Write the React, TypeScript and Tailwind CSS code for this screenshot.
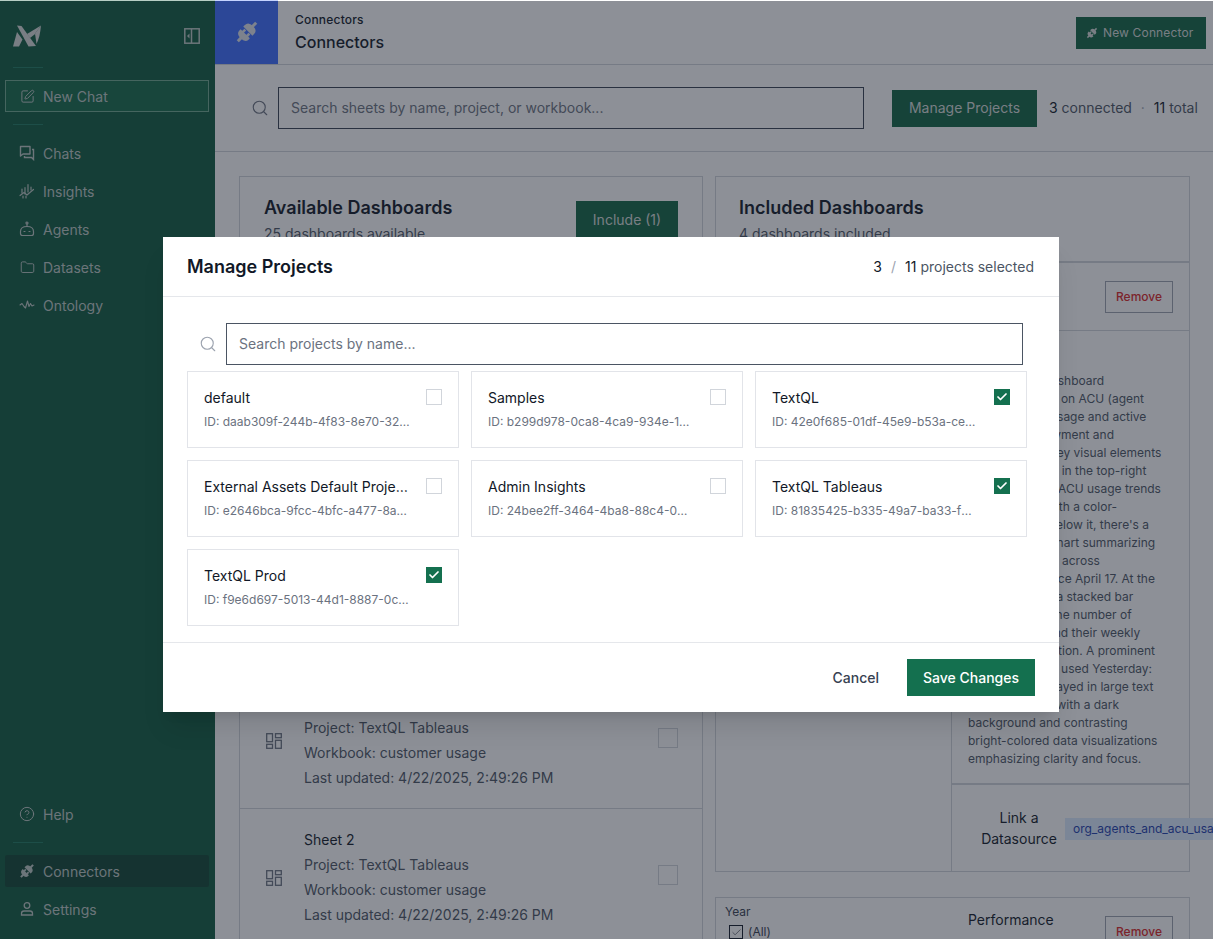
import { Check, CircleHelp, Folder, Search, SquarePen } from 'lucide-react';

const font = 'font-["Inter","Noto_Sans",sans-serif]';

function Logo() {
  return (
    <svg width="28" height="22" viewBox="0 0 28 22" fill="currentColor">
      <path d="M4 0.5 L8.5 1 L23 21 L15.5 21.5 Z" />
      <path d="M0 21.5 L4 7 L9.5 14.5 L6 21.5 Z" />
      <path d="M28 0.5 L14 9 L17 13 L21.5 9.5 Z" />
      <path d="M28 0.5 L22 8.5 L23.5 19 Q27 12 28 0.5 Z" />
    </svg>
  );
}

function PlugIcon({ size = 18 }: { size?: number }) {
  return (
    <svg width={size} height={size} viewBox="0 0 24 24" fill="currentColor">
      <g transform="rotate(45 12 12)">
        <rect x="10.5" y="-1" width="3" height="6" />
        <path d="M5.5 10.8 H18.5 V8.5 Q18.5 3.5 12 3.5 Q5.5 3.5 5.5 8.5 Z" />
        <rect x="7.8" y="11.5" width="2.6" height="4" />
        <rect x="13.6" y="11.5" width="2.6" height="4" />
        <path d="M5.5 14.5 H18.5 V16 Q18.5 21 12 21 Q5.5 21 5.5 16 Z" />
        <rect x="10.5" y="20" width="3" height="5" />
      </g>
    </svg>
  );
}

function ChatsIcon() {
  return (
    <svg width="16" height="16" viewBox="0 0 16 16" fill="none" stroke="currentColor" strokeWidth="1.4">
      <path d="M1.5 1.5 H11 V9 H4 L1.5 11 Z" strokeLinejoin="round" />
      <path d="M13 4.5 H14.5 V14.5 L12.5 12.5 H5.5 V11" />
    </svg>
  );
}

function InsightsIcon() {
  return (
    <svg width="16" height="16" viewBox="0 0 16 16" fill="none" stroke="currentColor" strokeWidth="1.2" strokeLinecap="round">
      <path d="M3 6 V10 M6 4.5 V11 M9 1.5 V9" />
      <path d="M1 12.5 L5 9.5 L8 12 L14.5 6.5" />
      <path d="M12 4 V7 M4 13 V15 M7 13 V15" />
    </svg>
  );
}

function AgentIcon() {
  return (
    <svg width="16" height="16" viewBox="0 0 16 16" fill="none" stroke="currentColor" strokeWidth="1.2" strokeLinecap="round">
      <circle cx="8" cy="2" r="1" />
      <path d="M8 3 V5.5" />
      <path d="M1.5 12.5 V10.5 Q1.5 5.5 8 5.5 Q14.5 5.5 14.5 10.5 V12.5 Q14.5 14.5 12.5 14.5 H3.5 Q1.5 14.5 1.5 12.5 Z" />
      <path d="M5 10.5 H6 M10 10.5 H11" />
    </svg>
  );
}

function OntologyIcon() {
  return (
    <svg width="16" height="16" viewBox="0 0 16 16" fill="none" stroke="currentColor" strokeWidth="1.1" strokeLinecap="round" strokeLinejoin="round">
      <path d="M1 8 L3 6.5 L5 9.5 L6.5 11 L8.5 4 L10 9.5 L11.5 6.5 L13 9 L15 8" />
    </svg>
  );
}

function UserIcon() {
  return (
    <svg width="16" height="16" viewBox="0 0 16 16" fill="none" stroke="currentColor" strokeWidth="1.3">
      <circle cx="8" cy="4.5" r="2.8" />
      <path d="M2.5 14 V12.5 Q2.5 10 5 10 H11 Q13.5 10 13.5 12.5 V14 Z" />
    </svg>
  );
}

function PanelIcon() {
  return (
    <svg width="16" height="16" viewBox="0 0 16 16" fill="none" stroke="currentColor" strokeWidth="1.5">
      <rect x="0.8" y="0.8" width="14.4" height="14.4" />
      <path d="M7.5 1 V15" />
      <path d="M5.5 5.5 L3 8 L5.5 10.5 Z" fill="currentColor" stroke="none" />
    </svg>
  );
}

function DashIcon() {
  return (
    <svg width="16" height="16" viewBox="0 0 16 16" fill="none" stroke="currentColor" strokeWidth="1.3">
      <rect x="0.7" y="0.7" width="5.8" height="8" />
      <rect x="9.5" y="0.7" width="5.8" height="4" />
      <rect x="9.5" y="7.3" width="5.8" height="8" />
      <rect x="0.7" y="11.3" width="5.8" height="4" />
    </svg>
  );
}

function NavItem({ icon, label, active }: { icon: React.ReactNode; label: string; active?: boolean }) {
  return (
    <div className={`ml-[5px] mr-[6px] flex h-8 items-center gap-[8px] rounded-[2px] pl-[14px] text-[14px] text-[#bcc8c4] ${active ? 'bg-[#0f4532]' : ''}`}>
      <span className="flex w-[16px] shrink-0 items-center justify-center">{icon}</span>
      {label}
    </div>
  );
}

function Divider() {
  return <div className="ml-[13px] h-px w-[30px] bg-[#1e7a60]" />;
}

function SheetRow({ name }: { name: string }) {
  return (
    <div className="flex items-center border-b border-[#d1d5db] py-[18px] pl-[26px] pr-[24px]">
      <span className="mt-[2px] text-[#6b7280]"><DashIcon /></span>
      <div className="ml-[22px] flex-1 text-[14px] leading-[25px] text-[#4b5563]">
        <div className="text-[#111827]">{name}</div>
        <div>Project: TextQL Tableaus</div>
        <div>Workbook: customer usage</div>
        <div>Last updated: 4/22/2025, 2:49:26 PM</div>
      </div>
      <div className="mb-[4px] h-[20px] w-[20px] border border-[#d1d5db]" />
    </div>
  );
}

const summary = [
  'This Tableau dashboard',
  'provides details on ACU (agent',
  'compute unit) usage and active',
  'for agent deployment and',
  'and adoption. Key visual elements',
  'includes a chart in the top-right',
  'corner tracking ACU usage trends',
  'over the year with a color-',
  'coded series. Below it, there\'s a',
  'horizontal bar chart summarizing',
  'of active agents across',
  'organization since April 17. At the',
  'bottom there is a stacked bar',
  'chart showing the number of',
  'active agents and their weekly',
  'total ACU utilization. A prominent',
  'metric, the ACU used Yesterday:',
  'where it is displayed in large text',
  'Design is sleek with a dark',
  'background and contrasting',
  'bright-colored data visualizations',
  'emphasizing clarity and focus.',
];

const projects = [
  { name: 'default', id: 'daab309f-244b-4f83-8e70-32c1d9a7e410', on: false },
  { name: 'Samples', id: 'b299d978-0ca8-4ca9-934e-1d7a62c0d5b3', on: false },
  { name: 'TextQL', id: '42e0f685-01df-45e9-b53a-ce81f4d07a26', on: true },
  { name: 'External Assets Default Projects', id: 'e2646bca-9fcc-4bfc-a477-8a03b6e1c952', on: false },
  { name: 'Admin Insights', id: '24bee2ff-3464-4ba8-88c4-0d95e7a1f368', on: false },
  { name: 'TextQL Tableaus', id: '81835425-b335-49a7-ba33-f2c67d0e9b14', on: true },
  { name: 'TextQL Prod', id: 'f9e6d697-5013-44d1-8887-0c4ab3e52d71', on: true },
];

function ProjectCard({ name, id, on }: { name: string; id: string; on: boolean }) {
  return (
    <div className="flex h-[77px] items-start border border-[#e2e4e9] px-4 pt-4">
      <div className="min-w-0 flex-1 pr-[16px]">
        <div className="truncate text-[14px] leading-5 text-[#111827]">{name}</div>
        <div className="mt-[6px] truncate text-[12px] leading-4 text-[#6b7280]">ID: {id}</div>
      </div>
      {on ? (
        <div className="mt-[1px] flex h-4 w-4 shrink-0 items-center justify-center bg-[#14704f] text-white">
          <Check size={12} strokeWidth={3.5} />
        </div>
      ) : (
        <div className="mt-[1px] h-4 w-4 shrink-0 border border-[#d1d5db] bg-white" />
      )}
    </div>
  );
}

export default function App() {
  return (
    <div className={`${font} relative flex h-[939px] w-full overflow-hidden bg-white`}>
      <aside className="flex h-full w-[215px] shrink-0 flex-col bg-[#0f5a3e] pb-[14px] text-[#bcc8c4]">
        <div className="flex items-center justify-between pl-[13px] pr-[15px] pt-[25px]">
          <span className="text-[#d6dbd9]"><Logo /></span>
          <PanelIcon />
        </div>
        <div className="mt-[20px]"><Divider /></div>
        <div className="ml-[5px] mr-[6px] mt-[12px] flex h-8 items-center gap-[8px] border border-[#6fa88f] bg-[#156a49] pl-[13px] text-[14px]">
          <span className="flex w-[16px] justify-center"><SquarePen size={15} strokeWidth={1.6} /></span>
          New Chat
        </div>
        <div className="mt-[12px]"><Divider /></div>
        <div className="mt-[12px] flex flex-col gap-[6px]">
          <NavItem icon={<ChatsIcon />} label="Chats" />
          <NavItem icon={<InsightsIcon />} label="Insights" />
          <NavItem icon={<AgentIcon />} label="Agents" />
          <NavItem icon={<Folder size={15} strokeWidth={1.5} />} label="Datasets" />
          <NavItem icon={<OntologyIcon />} label="Ontology" />
        </div>
        <div className="mt-auto">
          <NavItem icon={<CircleHelp size={16} strokeWidth={1.5} />} label="Help" />
          <div className="mt-[12px]"><Divider /></div>
          <div className="mt-[12px] flex flex-col gap-[6px]">
            <NavItem active icon={<PlugIcon size={16} />} label="Connectors" />
            <NavItem icon={<UserIcon />} label="Settings" />
          </div>
        </div>
      </aside>

      <main className="flex min-w-0 flex-1 flex-col">
        <header className="flex h-[65px] shrink-0 items-center border-b border-[#d1d5db]">
          <div className="flex h-full w-[63px] items-center justify-center bg-[#3d6dff] text-[#dfe3ea]">
            <PlugIcon size={24} />
          </div>
          <div className="ml-[17px] flex-1 pt-px text-[#111827]">
            <div className="text-[12px] font-medium leading-4 tracking-[0.2px]">Connectors</div>
            <div className="mt-[2px] text-[16px] font-medium leading-6">Connectors</div>
          </div>
          <div className="mr-[7px] mt-[2px] flex h-8 w-[130px] items-center gap-[5px] bg-[#106543] pl-[10px] text-[12px] tracking-[0.15px] text-[#d6dbd9]">
            <PlugIcon size={12} />
            New Connector
          </div>
        </header>

        <div className="flex h-[87px] shrink-0 items-center border-b border-[#d1d5db] pl-[36px] pr-[15px]">
          <Search size={18} strokeWidth={1.5} className="text-[#6b7280]" />
          <div className="ml-[9px] flex h-[42px] w-[586px] items-center border border-[#374151] pb-px pl-3 text-[14px] text-[#6b7280]">
            Search sheets by name, project, or workbook...
          </div>
          <div className="ml-[28px] flex h-[37px] w-[145px] items-center justify-center bg-[#106543] pb-px text-[14px] text-[#d6dbd9]">
            Manage Projects
          </div>
          <div className="ml-[12px] whitespace-nowrap pb-px text-[14px] text-[#4b5563]">
            <span className="text-[#111827]">3</span> connected <span className="mx-[5px] text-[#9ca3af]">·</span> <span className="text-[#111827]">11</span> total
          </div>
        </div>

        <div className="flex min-h-0 flex-1 gap-[12px] pl-[24px] pr-[23px] pt-[24px]">
          <section className="h-[800px] w-[464px] shrink-0 border border-[#d1d5db]">
            <div className="flex h-[84px] justify-between border-b border-[#d1d5db] pl-[24px] pr-[24px] pt-[19px]">
              <div>
                <div className="text-[18px] font-semibold leading-6 text-[#111827]">Available Dashboards</div>
                <div className="mt-[4px] text-[14px] leading-5 text-[#4b5563]">25 dashboards available</div>
              </div>
              <div className="mt-[5px] flex h-[37px] w-[102px] items-center justify-center bg-[#106543] pb-px text-[14px] text-[#d6dbd9]">Include (1)</div>
            </div>
            <SheetRow name="Sheet 5" />
            <SheetRow name="Sheet 4" />
            <SheetRow name="Sheet 3" />
            <SheetRow name="Sheet 1" />
            <SheetRow name="Sheet 2" />
          </section>

          <div className="flex min-w-0 flex-1 flex-col gap-[25px]">
            <section className="h-[696px] shrink-0 border border-[#d1d5db]">
              <div className="h-[86px] border-b-2 border-[#d1d5db] pl-[23px] pt-[19px]">
                <div className="text-[18px] font-semibold leading-6 text-[#111827]">Included Dashboards</div>
                <div className="mt-[4px] text-[14px] leading-5 text-[#4b5563]">4 dashboards included</div>
              </div>
              <div className="flex h-[68px] items-center justify-end border-b border-[#d1d5db] pr-[16px]">
                <div className="flex h-8 w-[68px] items-center justify-center border border-[#9ca3af] text-[12px] font-medium text-[#dc2626]">Remove</div>
              </div>
              <div className="ml-[235px] h-[calc(100%-154px)] border-l border-[#d1d5db]">
                <div className="h-[454px] border-b-2 border-[#d1d5db] pl-[16px] pt-[41px] text-[12px] leading-[18px] text-[#4b5563]">
                  {summary.map((line) => (
                    <div key={line} className="whitespace-nowrap">{line}</div>
                  ))}
                </div>
                <div className="relative flex h-[87px] items-center pb-[2px]">
                  <div className="ml-[22px] w-[90px] text-center text-[14px] leading-[21px] text-[#111827]">Link a Datasource</div>
                  <div className="absolute left-[113px] top-[33px] flex h-[22px] w-[200px] items-center whitespace-nowrap bg-[#dbeafe] pl-2 text-[12px] text-[#1e40af]">org_agents_and_acu_usage</div>
                </div>
              </div>
            </section>
            <section className="relative flex h-[200px] shrink-0 border border-[#d1d5db]">
              <div className="w-[236px] pl-[9px] pt-[5px] text-[12px] leading-[18px] text-[#374151]">
                <div>Year</div>
                <div className="mt-[2px] flex items-center gap-[5px] pl-[4px]">
                  <span className="flex h-[14px] w-[14px] items-center justify-center border border-[#111827] text-[#111827]"><Check size={11} strokeWidth={1.2} /></span>
                  (All)
                </div>
              </div>
              <div className="pl-[16px] pt-[12px] text-[14px] leading-5 text-[#111827]">Performance</div>
              <div className="absolute right-[16px] top-[18px] flex h-8 w-[68px] items-center justify-center border border-[#9ca3af] text-[12px] font-medium text-[#dc2626]">Remove</div>
            </section>
          </div>
        </div>
      </main>

      <div className="absolute inset-x-0 bottom-0 top-px bg-[#1b2130]/50" />
      <div className="absolute inset-x-0 top-0 h-px bg-white/70" />

      <div className="absolute left-[163px] top-[237px] flex h-[475px] w-[896px] flex-col bg-white shadow-xl">
        <div className="flex h-[60px] shrink-0 items-center justify-between border-b border-[#e5e7eb] pl-[24px] pr-[25px]">
          <div className="text-[18px] font-semibold text-[#111827]">Manage Projects</div>
          <div className="text-[14px] text-[#4b5563]">
            <span className="text-[#111827]">3</span>
            <span className="mx-[9px] text-[#9ca3af]">/</span>
            <span className="text-[#111827]">11</span> projects selected
          </div>
        </div>
        <div className="flex-1 pl-[24px] pr-[32px] pt-[26px]">
          <div className="flex items-center pl-[12px] pr-[4px]">
            <Search size={18} strokeWidth={1.5} className="text-[#9ca3af]" />
            <div className="ml-[9px] flex h-[42px] flex-1 items-center border border-[#4b5563] pb-px pl-3 text-[14px] text-[#6b7280]">
              Search projects by name...
            </div>
          </div>
          <div className="mt-[6px] grid grid-cols-3 gap-[12px]">
            {projects.map((p) => (
              <ProjectCard key={p.id} name={p.name} id={p.id} on={p.on} />
            ))}
          </div>
        </div>
        <div className="flex h-[70px] shrink-0 items-center justify-end border-t border-[#e5e7eb] pr-[24px]">
          <div className="pb-px text-[14px] font-medium text-[#374151]">Cancel</div>
          <div className="ml-[28px] flex h-[37px] w-[128px] items-center justify-center bg-[#14704f] pb-px text-[14px] font-medium text-white">Save Changes</div>
        </div>
      </div>
    </div>
  );
}
